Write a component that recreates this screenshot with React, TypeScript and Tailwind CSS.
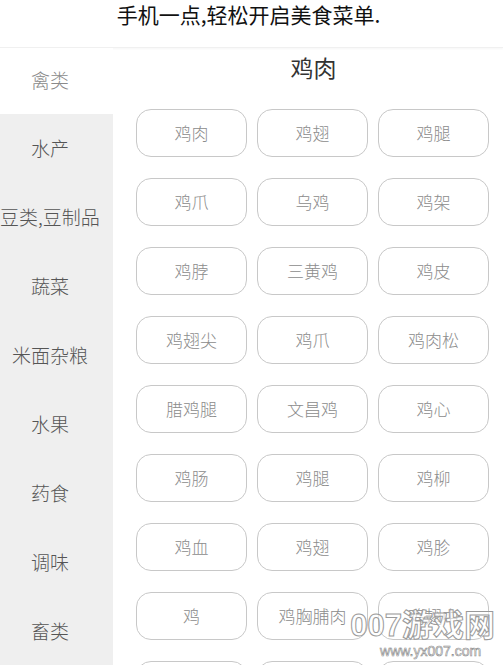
import React, { useState } from 'react';

const categories = ['禽类', '水产', '豆类,豆制品', '蔬菜', '米面杂粮', '水果', '药食', '调味', '畜类'];

const items = [
  '鸡肉', '鸡翅', '鸡腿',
  '鸡爪', '乌鸡', '鸡架',
  '鸡脖', '三黄鸡', '鸡皮',
  '鸡翅尖', '鸡爪', '鸡肉松',
  '腊鸡腿', '文昌鸡', '鸡心',
  '鸡肠', '鸡腿', '鸡柳',
  '鸡血', '鸡翅', '鸡胗',
  '鸡', '鸡胸脯肉', '鸡翅中',
  '鸡肝', '鸡胸', '鸡杂',
];

const font = "font-['Noto_Sans_CJK_SC','Noto_Sans',sans-serif]";

export default function App() {
  const [active, setActive] = useState(0);

  return (
    <div className={`w-[503px] h-[665px] overflow-hidden bg-white relative ${font}`}>
      {/* 顶部标题 */}
      <header className="h-[48px] flex justify-center border-b border-[#f0f0f0] shadow-[0_1px_2px_rgba(0,0,0,0.04)]">
        <span className="text-[21px] leading-[30px] text-[#111] -mt-[1px] -ml-[6px]">手机一点,轻松开启美食菜单.</span>
      </header>

      <div className="flex h-[617px]">
        {/* 左侧分类 */}
        <nav className="w-[113px] shrink-0 bg-[#efefef] flex flex-col">
          {categories.map((c, i) => (
            <button
              key={c}
              onClick={() => setActive(i)}
              className={`shrink-0 flex items-center justify-center pr-[13px] text-[19px] font-light whitespace-nowrap ${
                i === 0 ? 'h-[66px] pb-[2px]' : 'h-[69px]'
              } ${active === i ? 'bg-white text-[#8a8a8a]' : 'text-[#555]'}`}
            >
              {c}
            </button>
          ))}
        </nav>

        {/* 右侧内容 */}
        <main className="flex-1 pl-[23px] pr-[14px]">
          <h2 className="text-[23px] leading-[30px] text-[#333] text-center mt-[4px] ml-[2px]">鸡肉</h2>
          <div className="grid grid-cols-[repeat(3,111px)] gap-x-[10px] gap-y-[21px] mt-[27px]">
            {items.map((t, i) => (
              <div
                key={i}
                className="h-[48px] rounded-[15px] border border-[#c8c8c8] flex items-center justify-center text-[17px] font-light text-[#8c8c8c]"
              >
                {t}
              </div>
            ))}
          </div>
        </main>
      </div>

      {/* 水印 */}
      <div className="absolute right-[8px] bottom-[6px] flex flex-col items-center pointer-events-none">
        <span className="text-[31px] leading-[34px] font-bold text-white/60 [-webkit-text-stroke:1px_#9a9a9a] font-['Liberation_Sans','Noto_Sans_CJK_SC',sans-serif]">
          007游戏网
        </span>
        <span className="text-[14px] leading-[16px] text-white/60 [-webkit-text-stroke:0.6px_#8a8a8a] font-['Liberation_Sans',sans-serif] ml-[16px]">
          www.yx007.com
        </span>
      </div>
    </div>
  );
}
